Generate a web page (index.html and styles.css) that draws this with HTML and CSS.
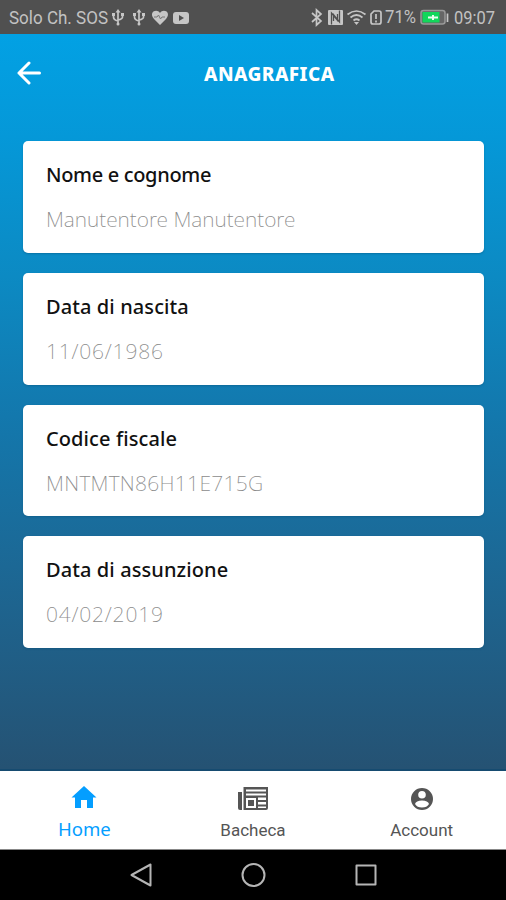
FILE: index.html
```html
<!DOCTYPE html>
<html lang="it">
<head>
<meta charset="utf-8">
<title>Anagrafica</title>
<link rel="stylesheet" href="styles.css">
</head>
<body>
<div class="phone">
  <div class="status">
    <svg class="status-row" width="506" height="34" viewBox="0 0 506 34">
      <g class="status-text">
        <text x="9" y="24" textLength="99" lengthAdjust="spacingAndGlyphs">Solo Ch. SOS</text>
        <text x="385" y="23" textLength="31" lengthAdjust="spacingAndGlyphs">71%</text>
        <text x="454" y="24" textLength="41" lengthAdjust="spacingAndGlyphs">09:07</text>
      </g>
      <g id="usb" class="line">
        <path d="M118 11V24M113.500 15v2q0 3 4.500 4M122.500 14v3q0 2-4.500 3"/>
        <path class="solid" d="M118 9l2.500 3.500h-5zM112 13h3v3h-3zM121 13h3v3h-3z"/>
        <circle class="solid" cx="118" cy="24" r="1.500"/>
      </g>
      <use href="#usb" x="21"/>
      <path class="solid" d="M160 25l-6-6c-6-7 3-11 6-6 3-5 12-1 6 6z"/>
      <path class="dark" d="M154 17h3l1.500-2 2 4 1.500-2h3"/>
      <rect class="solid" x="173" y="12" width="16" height="12" rx="3"/>
      <path class="hole" d="M179 15l5 3-5 3z"/>
      <path class="line" d="M312 13l9 8-4.500 4V10l4.500 4-9 8"/>
      <rect class="solid" x="328" y="10" width="15" height="15" rx="1"/>
      <path class="nfc-gap" d="M331.500 24.500V13l6 7.500V14M339.500 10.500V22l-6-7.500V21"/>
      <g class="line">
        <path d="M347.500 14.500q9-7 18 0M350.500 17.500q6-5 12 0M353.500 20.500q3-2.500 6 0"/>
        <path class="solid" d="M356.500 25l-2.500-3h5z"/>
        <path d="M374 11h5q2 0 2 2v9q0 2-2 2h-6q-2 0-2-2v-8z"/>
        <path d="M376 14v5M376 20.500v2"/>
      </g>
      <rect class="battery" x="421" y="10.500" width="24" height="13.500" rx="2.500"/>
      <path class="charge" d="M422.500 12h17v10.500h-17z"/>
      <path class="bolt" d="M428 17.500h10M433 15v5"/>
      <path class="line" d="M447.500 13.500v8.500"/>
    </svg>
  </div>
  <main class="screen">
    <header class="header">
      <svg class="back" width="24" height="24" viewBox="0 0 24 24"><path d="M22.500 12H2M12 2L2 12l10 10"/></svg>
      <h1>ANAGRAFICA</h1>
    </header>
    <div class="cards">
      <section class="card">
        <h2 class="name">Nome e cognome</h2>
        <p>Manutentore Manutentore</p>
      </section>
      <section class="card">
        <h2>Data di nascita</h2>
        <p class="date">11/06/1986</p>
      </section>
      <section class="card">
        <h2>Codice fiscale</h2>
        <p class="code">MNTMTN86H11E715G</p>
      </section>
      <section class="card">
        <h2>Data di assunzione</h2>
        <p class="date">04/02/2019</p>
      </section>
    </div>
  </main>
  <nav class="tabs">
    <div class="tab active">
      <svg width="26" height="22" viewBox="0 0 26 22"><path d="M13 0L.5 11.500H4V22h6v-8h6v8h6V11.500h3.500z"/></svg>
      <span>Home</span>
    </div>
    <div class="tab">
      <svg width="30" height="24" viewBox="0 0 30 24">
        <path d="M0 5h4v18H2q-2 0-2-2z"/>
        <path fill-rule="evenodd" d="M5.500 0H30v21q0 2-2 2H5.500zM8 2.500v2h20v-2zM8 6.500v2h20v-2zM8 11v10h10V11zM20 10.500v2.500h8v-2.500zM20 15v2.500h8V15zM20 19.500V21h8v-1.500zM10 13h6v6h-6z"/>
      </svg>
      <span>Bacheca</span>
    </div>
    <div class="tab">
      <svg width="24" height="24" viewBox="0 0 24 24">
        <path fill-rule="evenodd" d="M12 1a11 11 0 1 0 0 22a11 11 0 1 0 0-22zM12 4a3.800 3.800 0 1 1 0 7.600a3.800 3.800 0 1 1 0-7.600zM5 17q1-3.500 7-3.500t7 3.500q-2 3.500-7 3.500T5 17z"/>
      </svg>
      <span>Account</span>
    </div>
  </nav>
  <footer class="system">
    <svg width="506" height="50" viewBox="0 0 506 50"><path d="M150.500 14.500v21L131.500 25z"/><circle cx="253.500" cy="25" r="11"/><rect x="356.500" y="15.500" width="19" height="19"/></svg>
  </footer>
</div>
</body>
</html>
```
FILE: styles.css
```css
* { box-sizing: border-box; }
body { margin: 0; font-family: Roboto, sans-serif; }
svg { display: block; }
.phone { width: 506px; height: 900px; display: flex; flex-direction: column; overflow: hidden; }
.status { height: 34px; background: #505050; }
.status-text { fill: #c2c2c2; font-size: 17.5px; }
.line { fill: none; stroke: #c6c6c6; stroke-width: 1.7; }
.nfc-gap { fill: none; stroke: #505050; stroke-width: 1.3; }
.solid { fill: #c6c6c6; stroke: none; }
.dark { fill: none; stroke: #777; stroke-width: 1; }
.hole { fill: #505050; }
.battery { fill: #666; stroke: #999; stroke-width: 1.5; }
.charge { fill: #12d75b; }
.bolt { stroke: #eaffef; stroke-width: 2; }
.screen { height: 737px; background: linear-gradient(#02a1e4 0%, #0598d8 14%, #0c8ac3 33%, #1378ad 52%, #1d6692 75%, #255273 100%); border-bottom: 2px solid #164b70; }
.header { height: 107px; padding: 27px 17px 0; display: grid; grid-template-columns: 24px 1fr; }
.back { fill: none; stroke: white; stroke-width: 3; stroke-linecap: round; stroke-linejoin: round; }
h1 { margin: 0; padding-left: 163px; color: white; font: 800 19px/26px "Noto Sans", sans-serif; letter-spacing: .45px; }
.cards { padding: 0 22px 0 23px; display: flex; flex-direction: column; gap: 20px; }
.card { height: 111.800px; padding: 20px 23px; background: white; border-radius: 5px; box-shadow: 0 1px 2px #064d7666; font-family: "Noto Sans", sans-serif; }
.card h2 { margin: 0; color: #111; font-size: 20px; line-height: 28px; font-weight: 500; letter-spacing: .1px; }
.card .name { letter-spacing: -.33px; }
.card p { margin: 16px 0 0; color: #8c8c8c; font-size: 21px; line-height: 28px; font-weight: 250; }
.card .date { letter-spacing: .8px; }
.card .code { letter-spacing: .3px; }
.tabs { height: 79px; display: grid; grid-template-columns: 1fr 1fr 1fr; background: white; border-bottom: 1px solid #888; }
.tab { display: flex; flex-direction: column; align-items: center; padding-top: 16px; color: #555; fill: #555; font-size: 17px; }
.tab span { line-height: 24px; margin-top: 7px; }
.active { color: #049eff; fill: #049eff; padding-top: 15px; font-family: "Noto Sans", sans-serif; font-size: 18.6px; }
.active span { margin-top: 9px; }
.system { height: 50px; background: black; }
.system svg { fill: none; stroke: #b5b5b5; stroke-width: 2; stroke-linejoin: round; }
```
